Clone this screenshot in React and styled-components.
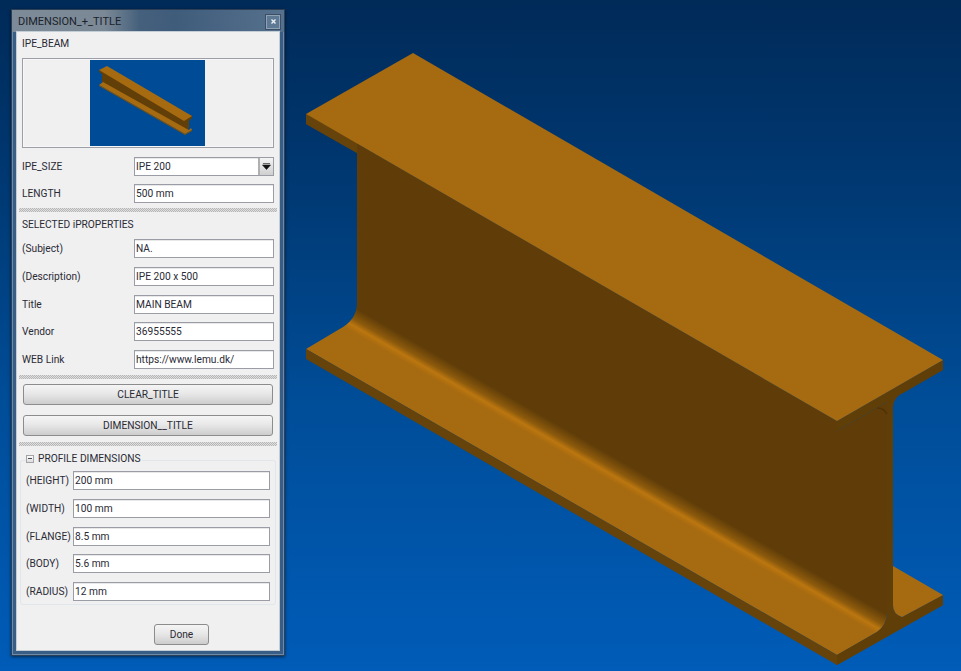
import React from "react";
import styled, { createGlobalStyle } from "styled-components";

const Global = createGlobalStyle`
  html, body { margin: 0; padding: 0; width: 961px; height: 671px; overflow: hidden; }
  #root { width: 961px; height: 671px; }
`;

const Desktop = styled.div`
  position: relative;
  width: 961px;
  height: 671px;
  overflow: hidden;
  background: linear-gradient(180deg, #002a58 0%, #003a75 30%, #004d98 60%, #005cb8 100%);
  font-family: Roboto, "Liberation Sans", Arial, sans-serif;
  font-size: 10.2px;
  color: #2a2a35;
`;

const Canvas = styled.svg`
  position: absolute;
  left: 0;
  top: 0;
`;

const Window = styled.div`
  position: absolute;
  left: 11px;
  top: 9px;
  width: 274px;
  height: 647px;
  box-sizing: border-box;
  display: flex;
  flex-direction: column;
  padding: 0 5px 5px;
  border: 1px solid #2b4056;
  background: #3a5d86;
  box-shadow: 0 1px 3px rgba(0, 0, 0, 0.55), inset 0 0 0 1px rgba(150, 175, 200, 0.55);
`;

const TitleBar = styled.div`
  height: 22px;
  flex: none;
  display: flex;
  align-items: center;
  justify-content: space-between;
  margin: 0 -5px;
  padding: 0 4px 0 6px;
  background: linear-gradient(90deg, #7d8a97 0%, #7b8996 34%, #45607c 47%, #3f5c7b 60%, #56718d 100%);
`;

const Title = styled.span`
  font-size: 11px;
  color: #1a222b;
`;

const CloseButton = styled.div`
  width: 14px;
  height: 14px;
  box-sizing: border-box;
  border: 1px solid #8fa2b5;
  outline: 1px solid #3a4f66;
  background: #5d7994;
  display: flex;
  align-items: center;
  justify-content: center;
  margin-top: 1px;
`;

const Client = styled.div`
  flex: 1;
  display: flex;
  flex-direction: column;
  padding: 0 5px;
  background: #f0f0f0;
  box-shadow: 0 0 0 1px #c3cdd6;
`;

const SectionLabel = styled.div`
  flex: none;
  height: ${(p) => p.$h}px;
  line-height: ${(p) => p.$h + 2}px;
`;

const Preview = styled.div`
  flex: none;
  height: 90px;
  margin: 4px 0 9px;
  padding-right: 1px;
  box-sizing: border-box;
  border: 1px solid #9c9ea8;
  box-shadow: inset 0 0 0 1px #f7f7f7;
  display: flex;
  justify-content: center;
  align-items: center;
`;

const Rows = styled.div`
  flex: none;
  display: flex;
  flex-direction: column;
  gap: ${(p) => p.$gap}px;
  margin-top: ${(p) => p.$top || 0}px;
`;

const FieldRow = styled.div`
  display: grid;
  grid-template-columns: ${(p) => p.$label}px 1fr;
  align-items: center;
  height: 19px;
`;

const RowLabel = styled.span`
  line-height: 19px;
`;

const Field = styled.div`
  height: 19px;
  box-sizing: border-box;
  border: 1px solid #9a9ca6;
  background: #fff;
  padding: 0 1px;
  line-height: 17px;
  display: flex;
  justify-content: space-between;
  box-shadow: inset 0 1px 0 #e8e8e8;
`;

const Arrow = styled.div`
  width: 15px;
  height: 17px;
  margin-right: -1px;
  border-left: 2px solid #b0b0b0;
  box-sizing: border-box;
  background: linear-gradient(180deg, #f4f4f4, #cfcfcf);
  display: flex;
  align-items: center;
  justify-content: center;
`;

const Splitter = styled.div`
  flex: none;
  height: 4px;
  margin: ${(p) => p.$top}px -3px 0 -3px;
  background: repeating-conic-gradient(#b6b6b6 0 25%, #dfdfdf 0 50%) 0 0 / 2px 2px;
`;

const PushButton = styled.div`
  flex: none;
  box-sizing: border-box;
  width: ${(p) => p.$w || "auto"};
  height: ${(p) => p.$height}px;
  margin: ${(p) => p.$margin};
  border: 1px solid #8c8c8c;
  border-radius: 3px;
  background: linear-gradient(180deg, #f5f5f5 0%, #e8e8e8 45%, #cdcdcd 100%);
  text-align: center;
  line-height: ${(p) => p.$height - 2}px;
`;

const GroupBox = styled.div`
  position: relative;
  flex: none;
  box-sizing: border-box;
  height: 145px;
  margin: 14px -2px 0 -2px;
  padding: 10px 5px 0 5px;
  border: 1px solid #dfe6ec;
  border-radius: 3px;
`;

const GroupTitle = styled.div`
  position: absolute;
  left: 5px;
  top: -8px;
  display: flex;
  align-items: center;
  gap: 4px;
  padding-right: 2px;
  background: #f0f0f0;
`;

const Minus = styled.div`
  width: 8px;
  height: 8px;
  border: 1px solid #a4a4a8;
  box-sizing: border-box;
  background: linear-gradient(180deg, #fbfbfb, #dcdcdc);
  display: flex;
  align-items: center;
  justify-content: center;
  &::after {
    content: "";
    width: 4px;
    height: 1px;
    background: #4a4a55;
  }
`;

const Footer = styled.div`
  flex: none;
  display: flex;
  justify-content: flex-start;
  padding-left: 132px;
`;

const MiniBeam = () => (
  <svg width="115" height="86" viewBox="90 60 115 86" style={{ display: "block" }}>
    <rect x="90" y="60" width="115" height="86" fill="#004b95" />
    <path d="M99 70 V72 L102 74 V84 L187 131 L189 128 V121 L192 118 V116 Z" fill="#623f08" />
    <path d="M99 85 L103 82 L187 129 L189 130 L191 128 L192 130 L185 134 Z" fill="#a66a10" />
    <path d="M99 86 V85 L185 134 L192 130 V131 L185 135 Z" fill="#7c510c" />
    <path d="M107 66 L192 116 L184 121 L99 70 Z" fill="#a66a10" />
  </svg>
);

const Beam = () => (
  <Canvas width="961" height="671" viewBox="0 0 961 671">
    <defs>
      <linearGradient id="fillet" gradientUnits="userSpaceOnUse" x1="-42.5" y1="73.6" x2="-57.5" y2="99.6">
        <stop offset="0" stopColor="#603d08" />
        <stop offset="0.14" stopColor="#603d08" />
        <stop offset="0.5" stopColor="#8c5a0c" />
        <stop offset="0.68" stopColor="#bb760f" />
        <stop offset="0.88" stopColor="#a66a10" />
        <stop offset="1" stopColor="#a66a10" />
      </linearGradient>
    </defs>
    <path d="M306 114 V124 L357 153 V303 Q357 318 343 327 L306 349 L837 655 L877 632 Q887 625 887 612 V402 L837 431 V421 Z" fill="url(#fillet)" />
    <path d="M306 349 V359 L837 665 L943 605 V595 L837 655 Z" fill="#66430a" />
    <path d="M887 612 Q887 625 877 632 L837 655 L837 665 L943 605 V595 L902 617 Q893 614 893 605 V407 Q893 397 905 392 L943 370 V360 L837 421 V431 L887 402 Z" fill="#603e08" />
    <path d="M893 566 L943 595 L902 617 Q893 614 893 605 Z" fill="#a66a10" />
    <path d="M306 114 V124 L357 153 L357 143 Z" fill="#66430a" />
    <path d="M413 53 L943 360 L837 421 L306 114 Z" fill="#a66a10" />
    <path d="M877 408 Q884 408 887 414" fill="none" stroke="#4f3306" strokeWidth="1.5" />
  </Canvas>
);

const Text = ({ label, value, labelWidth = 112 }) => (
  <FieldRow $label={labelWidth}>
    <RowLabel>{label}</RowLabel>
    <Field>{value}</Field>
  </FieldRow>
);

export default function App() {
  return (
    <Desktop>
      <Global />
      <Beam />
      <Window>
        <TitleBar>
          <Title>DIMENSION_+_TITLE</Title>
          <CloseButton>
            <svg width="7" height="7" viewBox="0 0 7 7">
              <path d="M1.5 1.5 L5.5 5.5 M5.5 1.5 L1.5 5.5" stroke="#eef2f6" strokeWidth="1.4" />
            </svg>
          </CloseButton>
        </TitleBar>
        <Client>
          <SectionLabel $h={22}>IPE_BEAM</SectionLabel>
          <Preview>
            <MiniBeam />
          </Preview>
          <Rows $gap={8}>
            <FieldRow $label={112}>
              <RowLabel>IPE_SIZE</RowLabel>
              <Field>
                IPE 200
                <Arrow>
                  <svg width="9" height="7" viewBox="0 0 9 7">
                    <path d="M1 0.5 H8 M0.5 2 H8.5 L4.5 6.5 Z" fill="#111" stroke="#111" strokeWidth="0.6" />
                  </svg>
                </Arrow>
              </Field>
            </FieldRow>
            <Text label="LENGTH" value="500 mm" />
          </Rows>
          <Splitter $top={5} />
          <SectionLabel $h={24}>SELECTED iPROPERTIES</SectionLabel>
          <Rows $gap={8.75} $top={3}>
            <Text label="(Subject)" value="NA." />
            <Text label="(Description)" value="IPE 200 x 500" />
            <Text label="Title" value="MAIN BEAM" />
            <Text label="Vendor" value="36955555" />
            <Text label="WEB Link" value="https://www.lemu.dk/" />
          </Rows>
          <Splitter $top={6} />
          <PushButton $height={21} $margin="5px 1px 0">CLEAR_TITLE</PushButton>
          <PushButton $height={21} $margin="10px 1px 0">DIMENSION__TITLE</PushButton>
          <Splitter $top={6} />
          <GroupBox>
            <GroupTitle>
              <Minus />
              PROFILE DIMENSIONS
            </GroupTitle>
            <Rows $gap={8.75}>
              <Text label="(HEIGHT)" value="200 mm" labelWidth={47} />
              <Text label="(WIDTH)" value="100 mm" labelWidth={47} />
              <Text label="(FLANGE)" value="8.5 mm" labelWidth={47} />
              <Text label="(BODY)" value="5.6 mm" labelWidth={47} />
              <Text label="(RADIUS)" value="12 mm" labelWidth={47} />
            </Rows>
          </GroupBox>
          <Footer>
            <PushButton $w="55px" $height={21} $margin="19px 0 0">Done</PushButton>
          </Footer>
        </Client>
      </Window>
    </Desktop>
  );
}
